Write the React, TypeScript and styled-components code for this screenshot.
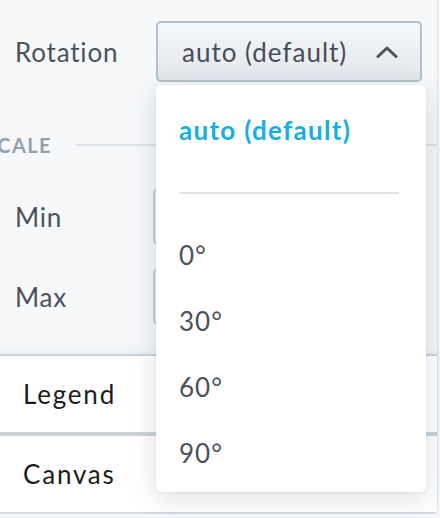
import styled, { createGlobalStyle } from 'styled-components';

const GlobalStyle = createGlobalStyle`
    html, body {
        margin: 0;
        padding: 0;
        background: #f5f7f9;
        font-family: Lato, "Open Sans", sans-serif;
    }
`;

const rotationOptions = ['0°', '30°', '60°', '90°'];

const ChevronUp = () => (
    <svg width='22' height='12' viewBox='0 0 22 12' fill='none'>
        <path
            d='M2 10.5 L11 2 L20 10.5'
            stroke='#4b535b'
            strokeWidth='3'
            strokeLinecap='round'
            strokeLinejoin='round'
        />
    </svg>
);

const App = () => {
    return (
        <Viewport>
            <GlobalStyle />
            <Panel>
                <Settings>
                    <FieldRow>
                        <FieldLabel>Rotation</FieldLabel>
                        <SelectWrap>
                            <SelectButton>
                                <span>auto (default)</span>
                                <ChevronUp />
                            </SelectButton>
                            <Menu>
                                <MenuItem $selected>auto (default)</MenuItem>
                                <MenuDivider />
                                {rotationOptions.map((option) => (
                                    <MenuItem key={option}>{option}</MenuItem>
                                ))}
                            </Menu>
                        </SelectWrap>
                    </FieldRow>

                    <SectionHeading>
                        <span>Scale</span>
                        <HeadingLine />
                    </SectionHeading>

                    <FieldRow $input>
                        <FieldLabel>Min</FieldLabel>
                        <TextInput />
                    </FieldRow>
                    <FieldRow $input>
                        <FieldLabel>Max</FieldLabel>
                        <TextInput />
                    </FieldRow>
                </Settings>

                <AccordionHeader $first>Legend</AccordionHeader>
                <AccordionHeader>Canvas</AccordionHeader>
            </Panel>
        </Viewport>
    );
};

const Viewport = styled.div`
    width: 440px;
    height: 518px;
    overflow: hidden;
    background: #f5f7f9;
`;

const Panel = styled.div`
    margin-left: -30px;
    width: 467px;
    border-right: 1px solid #dfe5ea;
    border-bottom: 2px solid #d3dae1;
    border-bottom-right-radius: 5px;
    background: #f6f8fa;
`;

const Settings = styled.div`
    display: flex;
    flex-direction: column;
    padding: 21px 0 29px 45px;
    background: #f6f8fa;
`;

const FieldRow = styled.div<{ $input?: boolean }>`
    display: flex;
    align-items: center;
    height: ${(p) => (p.$input ? '57px' : '61px')};
    & + & {
        margin-top: 23px;
    }
`;

const FieldLabel = styled.div`
    width: 141px;
    flex-shrink: 0;
    font-size: 26px;
    color: #4a525a;
    letter-spacing: 0.8px;
`;

const SelectWrap = styled.div`
    position: relative;
    width: 266px;
    height: 100%;
`;

const SelectButton = styled.div`
    box-sizing: border-box;
    height: 100%;
    display: flex;
    align-items: center;
    justify-content: space-between;
    padding: 0 22px 0 24px;
    border: 2px solid #b4c1ce;
    border-radius: 5px;
    background: linear-gradient(#f6f8fa, #e2e7ec);
    font-size: 26px;
    color: #464e56;
    letter-spacing: 1px;
`;

const Menu = styled.div`
    position: absolute;
    z-index: 2;
    top: calc(100% + 3px);
    left: 0;
    width: 270px;
    box-sizing: border-box;
    padding: 12px 0 6px;
    background: #ffffff;
    border-radius: 5px;
    box-shadow: 0 6px 28px rgba(40, 55, 70, 0.16), 0 1px 3px rgba(40, 55, 70, 0.06);
`;

const MenuItem = styled.div<{ $selected?: boolean }>`
    height: 66px;
    display: flex;
    align-items: center;
    padding-left: 23px;
    font-size: 26px;
    letter-spacing: ${(p) => (p.$selected ? '1.3px' : '1px')};
    font-weight: ${(p) => (p.$selected ? 700 : 400)};
    color: ${(p) => (p.$selected ? '#15b0e1' : '#4a525a')};
`;

const MenuDivider = styled.div`
    height: 2px;
    margin: 29px 27px 28px 23px;
    background: #dde4ea;
`;

const SectionHeading = styled.div`
    display: flex;
    align-items: center;
    gap: 24px;
    height: 24px;
    margin: 51px 0 31px -30px;
    font-size: 20px;
    font-weight: 700;
    letter-spacing: 1.4px;
    text-transform: uppercase;
    color: #95a2ae;
`;

const HeadingLine = styled.div`
    flex: 1;
    height: 2px;
    background: #dde3e9;
`;

const TextInput = styled.div`
    box-sizing: border-box;
    margin-left: -3px;
    width: 266px;
    height: 100%;
    border: 2px solid #c3ced8;
    border-radius: 5px;
    background: #eef1f4;
`;

const AccordionHeader = styled.div<{ $first?: boolean }>`
    height: 76px;
    display: flex;
    align-items: center;
    padding-left: 53px;
    background: #ffffff;
    border-top: ${(p) => (p.$first ? '2px solid #c9d3dd' : '4px solid #c8d3dd')};
    box-shadow: ${(p) => (p.$first ? '0 -4px 6px rgba(120, 140, 160, 0.08)' : 'none')};
    font-size: 26px;
    color: #1b1d20;
    letter-spacing: 1.8px;
`;

export default App;
